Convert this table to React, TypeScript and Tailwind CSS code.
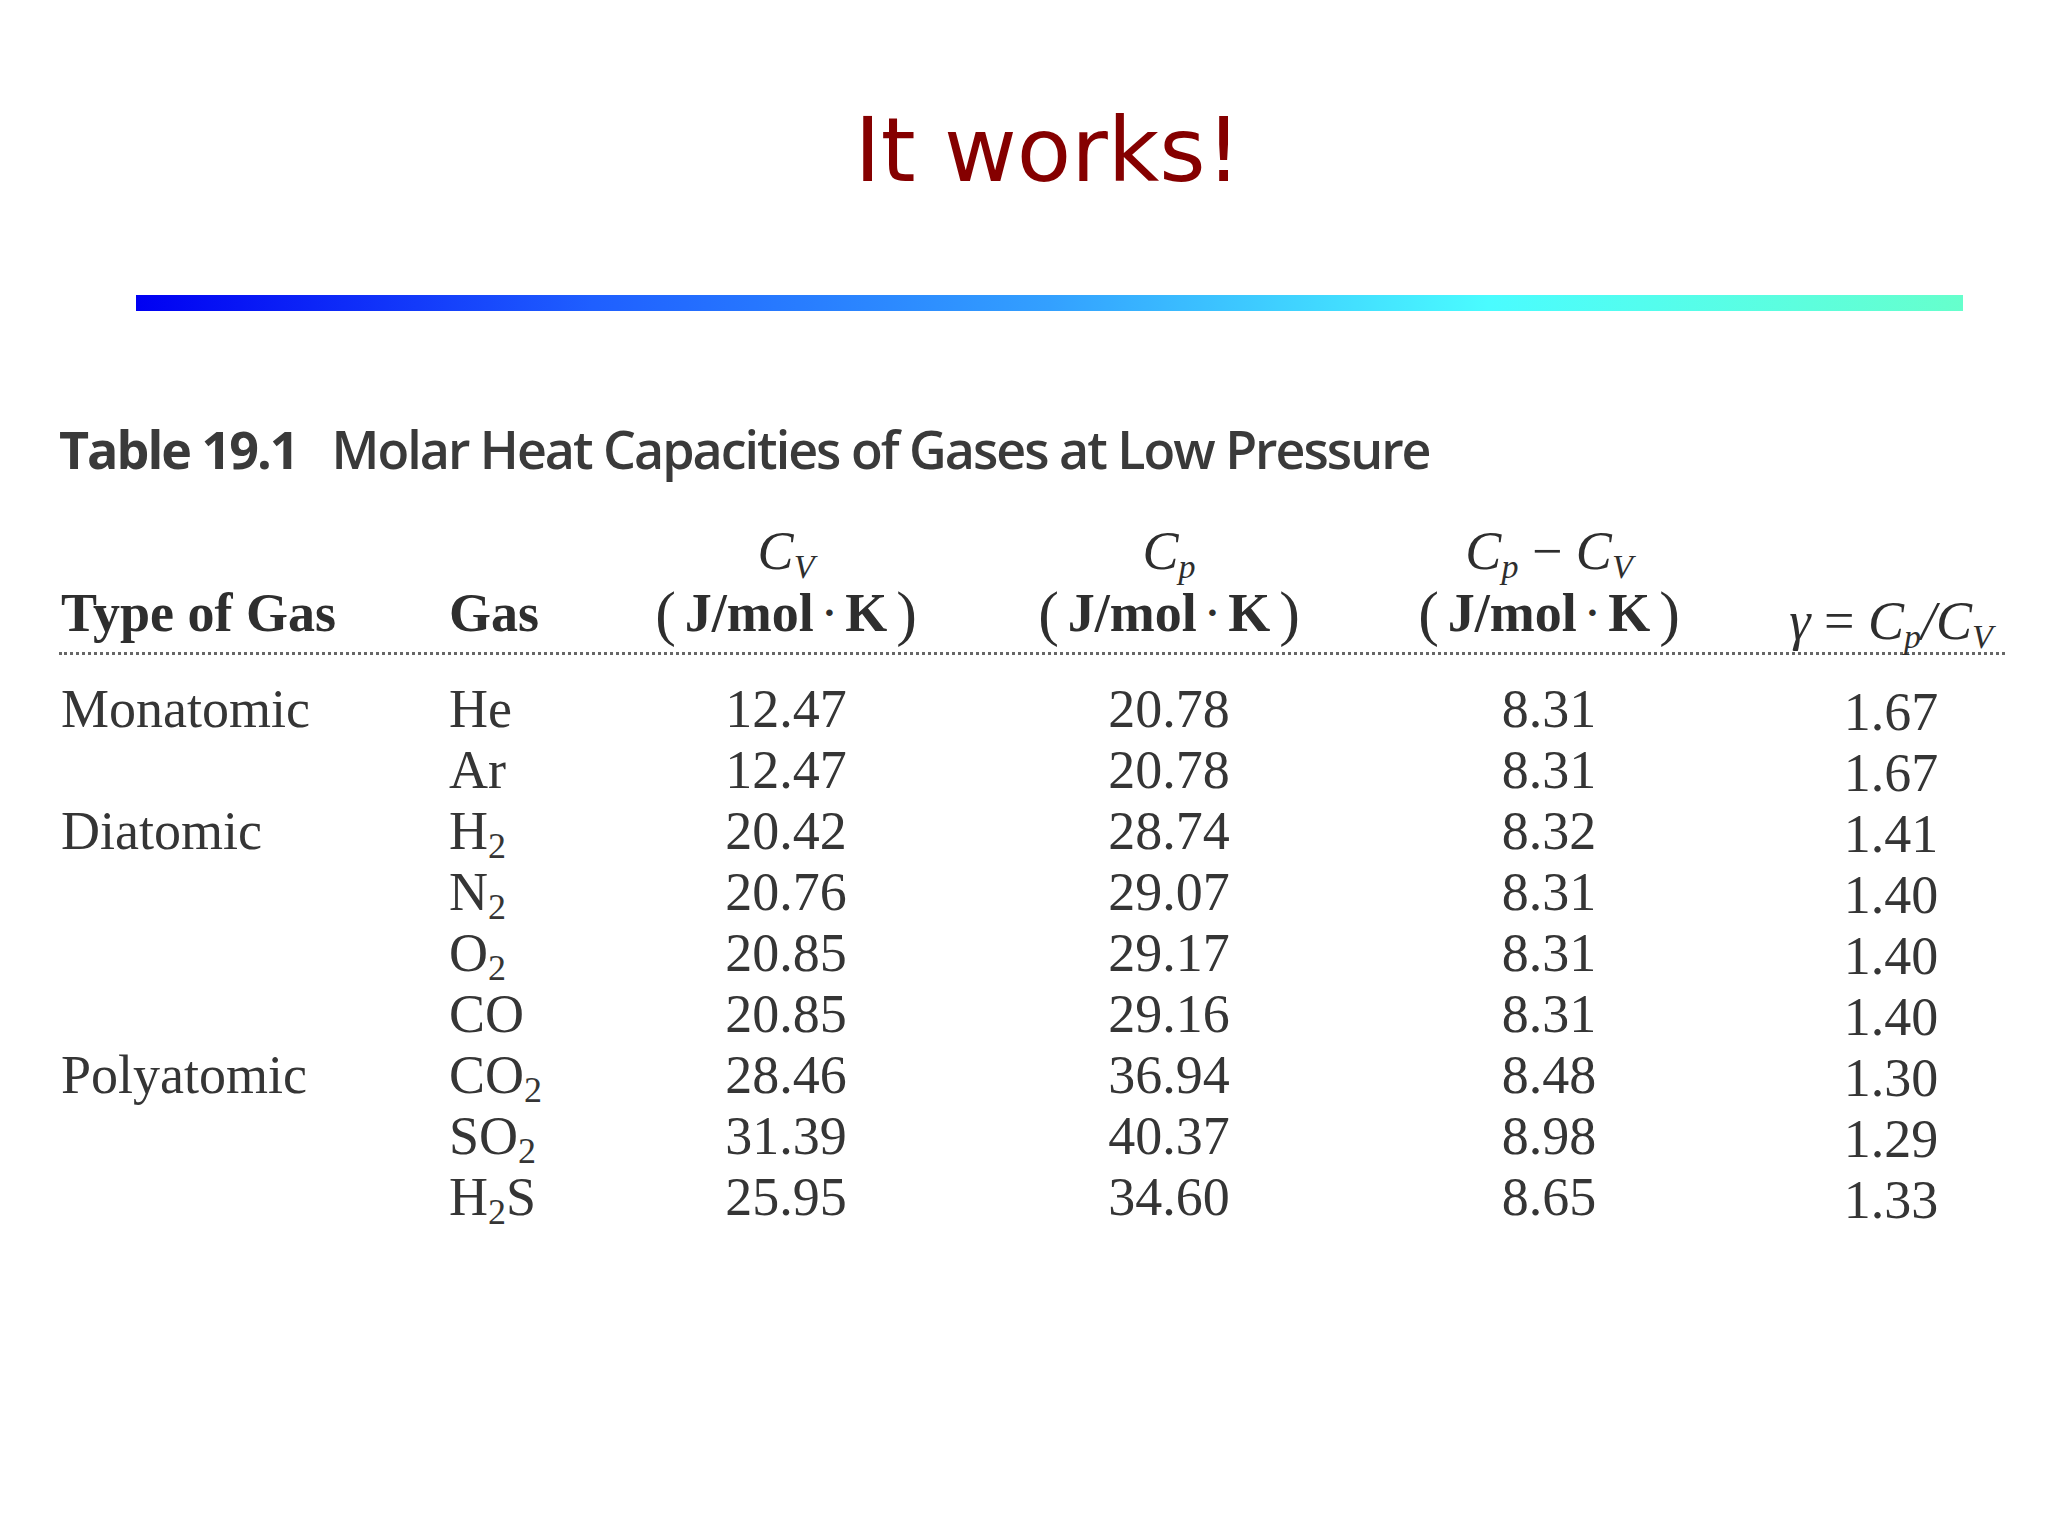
import React from "react";

type Row = {
  type?: string;
  gas: React.ReactNode;
  cv: string;
  cp: string;
  diff: string;
  gamma: string;
};

const Sub = (props: { children: React.ReactNode; italic?: boolean }) => (
  <sub className={props.italic ? "text-[34px] italic" : "text-[36px]"}>{props.children}</sub>
);

const rows: Row[] = [
  { type: "Monatomic", gas: "He", cv: "12.47", cp: "20.78", diff: "8.31", gamma: "1.67" },
  { gas: "Ar", cv: "12.47", cp: "20.78", diff: "8.31", gamma: "1.67" },
  { type: "Diatomic", gas: <>H<Sub>2</Sub></>, cv: "20.42", cp: "28.74", diff: "8.32", gamma: "1.41" },
  { gas: <>N<Sub>2</Sub></>, cv: "20.76", cp: "29.07", diff: "8.31", gamma: "1.40" },
  { gas: <>O<Sub>2</Sub></>, cv: "20.85", cp: "29.17", diff: "8.31", gamma: "1.40" },
  { gas: "CO", cv: "20.85", cp: "29.16", diff: "8.31", gamma: "1.40" },
  { type: "Polyatomic", gas: <>CO<Sub>2</Sub></>, cv: "28.46", cp: "36.94", diff: "8.48", gamma: "1.30" },
  { gas: <>SO<Sub>2</Sub></>, cv: "31.39", cp: "40.37", diff: "8.98", gamma: "1.29" },
  { gas: <>H<Sub>2</Sub>S</>, cv: "25.95", cp: "34.60", diff: "8.65", gamma: "1.33" },
];

const cols = "grid grid-cols-[388px_147px_380px_386px_374px_310px]";

function Units() {
  return (
    <div className="flex items-center justify-center gap-[9px]">
      <span className="font-normal text-[62px] leading-[62px]">(</span>
      <span>J/mol</span>
      <span className="text-[40px]">·</span>
      <span>K</span>
      <span className="font-normal text-[62px] leading-[62px]">)</span>
    </div>
  );
}

function App() {
  return (
    <div className="w-[2048px] h-[1536px] bg-white overflow-hidden">
      <h1 className="pt-[100px] pl-[48px] text-center text-[89px] leading-[100px] text-[#850000] font-['DejaVu_Sans',sans-serif]">
        It works!
      </h1>
      <div className="mt-[95px] ml-[136px] w-[1827px] h-[16px] bg-[linear-gradient(90deg,#0000f2_0%,#1f5fff_25%,#33a0ff_50%,#4afcff_74%,#66ffcc_100%)]" />

      <h2 className="mt-[108px] pl-[59px] text-[52px] leading-[60px] font-semibold tracking-[-2px] text-[#3a3a3a] font-['Open_Sans',sans-serif]">
        <span className="font-bold">Table 19.1</span>
        <span className="ml-[34px]">Molar Heat Capacities of Gases at Low Pressure</span>
      </h2>

      <div className="mt-[41px] font-['Liberation_Serif',serif] text-[54px] text-[#2e2e2e]">
        <div className={`${cols} pl-[61px] items-end font-bold leading-[62px]`}>
          <div>Type of Gas</div>
          <div>Gas</div>
          <div className="text-center">
            <div className="font-normal italic">
              C<Sub italic>V</Sub>
            </div>
            <Units />
          </div>
          <div className="text-center">
            <div className="font-normal italic">
              C<Sub italic>p</Sub>
            </div>
            <Units />
          </div>
          <div className="text-center">
            <div className="font-normal italic">
              C<Sub italic>p</Sub> <span className="not-italic">−</span> C<Sub italic>V</Sub>
            </div>
            <Units />
          </div>
          <div className="text-center font-normal translate-y-[8px]">
            <span className="italic">γ</span> = <span className="italic">C<Sub italic>p</Sub>/C<Sub italic>V</Sub></span>
          </div>
        </div>
        <div className="mt-[8px] ml-[59px] w-[1946px] border-t-[3px] border-dotted border-[#666]" />

        <div className="mt-[24px] text-[#353535]">
          {rows.map((r, i) => (
            <div key={i} className={`${cols} pl-[61px] leading-[61px]`}>
              <div>{r.type}</div>
              <div>{r.gas}</div>
              <div className="text-center">{r.cv}</div>
              <div className="text-center">{r.cp}</div>
              <div className="text-center">{r.diff}</div>
              <div className="text-center translate-y-[3px]">{r.gamma}</div>
            </div>
          ))}
        </div>
      </div>
    </div>
  );
}

export default App;
